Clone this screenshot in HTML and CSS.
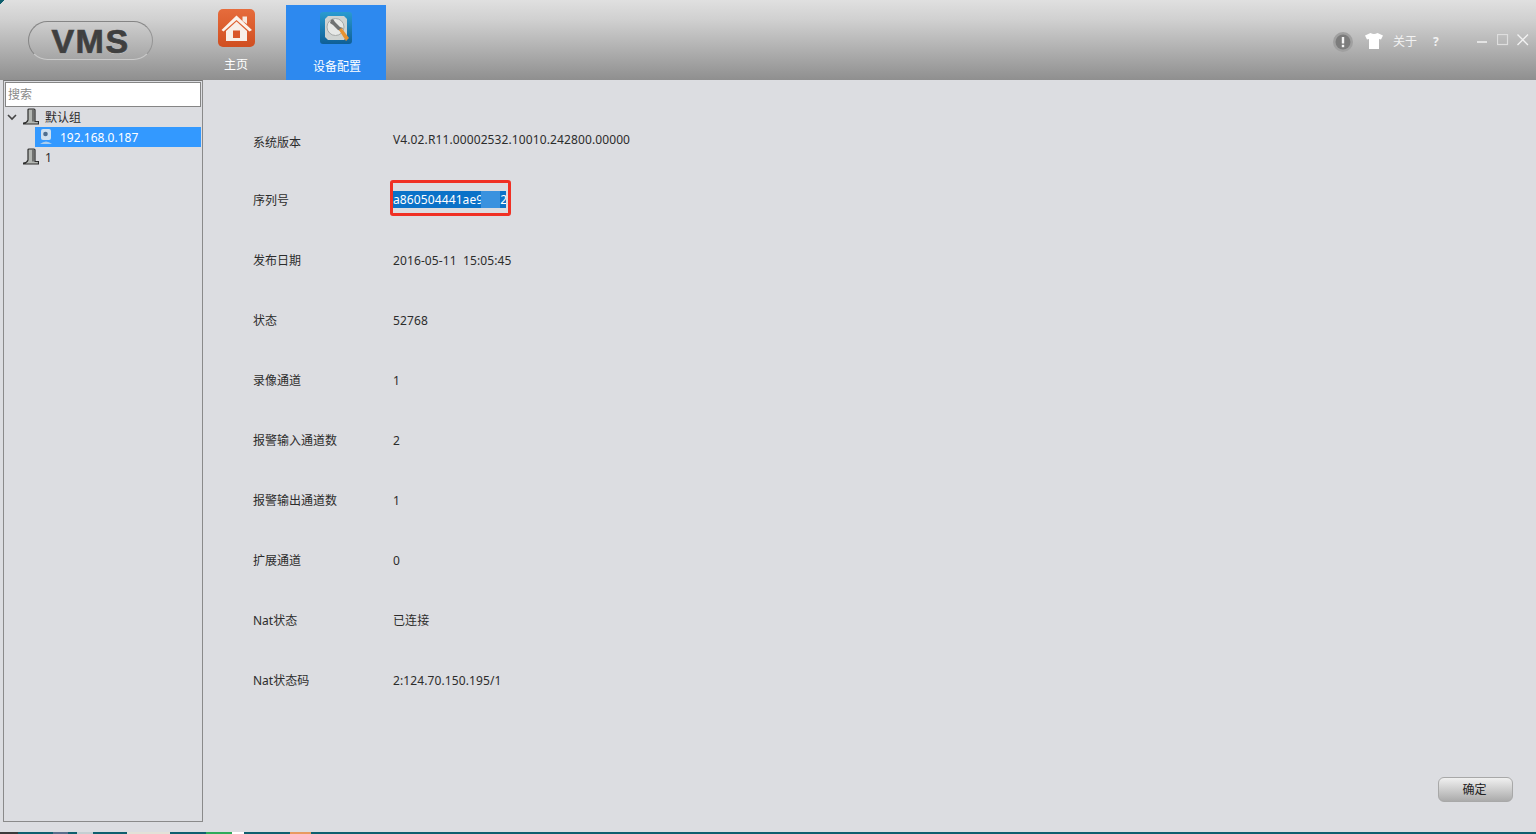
FILE: index.html
```html
<!DOCTYPE html>
<html lang="zh-CN">
<head>
<meta charset="utf-8">
<title>VMS</title>
<link rel="stylesheet" href="styles.css">
</head>
<body>
<div class="app">
  <header class="header">
    <div class="logo"><span class="logo-text">VMS</span></div>
    <nav class="tabs">
      <div class="tab">
        <svg class="tab-icon home-icon" viewBox="0 0 37 38">
          <defs><linearGradient id="homeBg" x1="0" y1="0" x2="0" y2="1"><stop offset="0" stop-color="#e66c3c"/><stop offset="1" stop-color="#d04e20"/></linearGradient></defs>
          <rect x="0" y="0" width="37" height="38" rx="5" fill="url(#homeBg)"/>
          <path d="M24.500 7.500 H29 V15 L24.500 12 Z" fill="#f6e9e0"/>
          <path d="M18.500 6.500 L34 21 L31.500 22.500 L18.500 11 L5.500 22.500 L3.500 21 Z" fill="#fbf3ec"/>
          <path d="M8 22 L18.500 12.500 L29 22 V32 H8 Z" fill="#f8efe8"/>
          <rect x="15" y="21.500" width="7" height="7.500" fill="#d9562a"/>
        </svg>
        <span class="tab-label">主页</span>
      </div>
      <div class="tab tab-active">
        <svg class="tab-icon config-icon" viewBox="0 0 32 33">
          <defs><linearGradient id="cfgBg" x1="0" y1="0" x2="0" y2="1"><stop offset="0" stop-color="#2a9bd0"/><stop offset="1" stop-color="#0f5f96"/></linearGradient></defs>
          <rect x="0" y="0" width="32" height="32" rx="3" fill="url(#cfgBg)"/>
          <path d="M8 4 H24 L27 7 V25 L24 28 H8 L5 25 V7 Z" fill="#cfd3d1"/>
          <circle cx="15.500" cy="15" r="8.500" fill="#e6e8e6" stroke="#a7aaa8"/>
          <path d="M11 8 L13 7 L15 10 L20 15 L23 16 L21 19 L18 18 L13 13 L10 11 Z" fill="#6f7272"/>
          <path d="M19 18 L21.500 16 L29 26 L26 29 Z" fill="#e8912f"/>
        </svg>
        <span class="tab-label">设备配置</span>
      </div>
    </nav>
    <div class="tools">
      <svg class="tool-alert" viewBox="0 0 20 20">
        <circle cx="10" cy="10" r="10" fill="#a0a0a0"/>
        <circle cx="10" cy="10" r="7.500" fill="#7c7c7c"/>
        <rect x="8.800" y="5" width="2.400" height="6.500" fill="#f4f4f4"/>
        <rect x="8.800" y="12.800" width="2.400" height="2.400" fill="#f4f4f4"/>
      </svg>
      <svg class="tool-shirt" viewBox="0 0 18 16">
        <path d="M5.500 0 Q9 2 12.500 0 L18 2.500 L16 6.500 L14 6 V16 H4 V6 L2 6.500 L0 2.500 Z" fill="#fff"/>
      </svg>
      <span class="tool-about">关于</span>
      <span class="tool-help">?</span>
      <div class="window-buttons">
        <svg class="win-btn" viewBox="0 0 12 12"><path d="M0 8 H10" stroke="#f2f2f2" stroke-width="1.500"/></svg>
        <svg class="win-btn" viewBox="0 0 12 12"><rect x="0.500" y="0.500" width="10" height="10" fill="none" stroke="#dedede" stroke-width="1.200"/></svg>
        <svg class="win-btn" viewBox="0 0 12 12"><path d="M0.500 0.500 L11 11 M11 0.500 L0.500 11" stroke="#f2f2f2" stroke-width="1.300"/></svg>
      </div>
    </div>
  </header>

  <main class="main">
    <aside class="sidebar">
      <input class="search" type="text" placeholder="搜索">
      <ul class="tree">
        <li class="tree-row">
          <svg class="chevron" viewBox="0 0 10 7"><path d="M1 1 L5 5 L9 1" fill="none" stroke="#444" stroke-width="1.600"/></svg>
          <svg class="group-icon" viewBox="0 0 16 17"><path d="M5 2 Q5 1 6 1 H11 Q12 1 12 2 V13.500 H15.500 V16 H0.500 V15 Q4 15 5 12 Z" fill="#b4b7b3" stroke="#2e2e2e" stroke-width="1.200"/><path d="M10 1.500 V13.500" stroke="#5a5a5a" stroke-width="1.500"/></svg>
          <span class="tree-label">默认组</span>
        </li>
        <li class="tree-row tree-selected">
          <svg class="camera-icon" viewBox="0 0 14 16"><rect x="2" y="0" width="10" height="11" rx="2" fill="#cfe0ee"/><circle cx="6.500" cy="5" r="2.300" fill="#4f6f8f"/><path d="M1 15 Q7 10 13 15 Z" fill="#a9cdee"/></svg>
          <span class="tree-ip">192.168.0.187</span>
        </li>
        <li class="tree-row">
          <svg class="group-icon group-icon-plain" viewBox="0 0 16 17"><path d="M5 2 Q5 1 6 1 H11 Q12 1 12 2 V13.500 H15.500 V16 H0.500 V15 Q4 15 5 12 Z" fill="#b4b7b3" stroke="#2e2e2e" stroke-width="1.200"/><path d="M10 1.500 V13.500" stroke="#5a5a5a" stroke-width="1.500"/></svg>
          <span class="tree-label">1</span>
        </li>
      </ul>
    </aside>
    <section class="content">
      <dl class="info">
        <div class="info-row"><dt>系统版本</dt><dd class="raised">V4.02.R11.00002532.10010.242800.00000</dd></div>
        <div class="info-row info-serial"><dt>序列号</dt><dd class="serial"><span class="selection">a860504441ae9<span class="mask"></span>2</span><span class="red-box"></span></dd></div>
        <div class="info-row"><dt>发布日期</dt><dd>2016-05-11 15:05:45</dd></div>
        <div class="info-row"><dt>状态</dt><dd>52768</dd></div>
        <div class="info-row"><dt>录像通道</dt><dd>1</dd></div>
        <div class="info-row"><dt>报警输入通道数</dt><dd>2</dd></div>
        <div class="info-row"><dt>报警输出通道数</dt><dd>1</dd></div>
        <div class="info-row"><dt>扩展通道</dt><dd>0</dd></div>
        <div class="info-row"><dt>Nat状态</dt><dd>已连接</dd></div>
        <div class="info-row"><dt>Nat状态码</dt><dd>2:124.70.150.195/1</dd></div>
      </dl>
      <div class="actions"><button class="ok-btn" type="button">确定</button></div>
    </section>
  </main>
  <footer class="taskbar">
    <span class="tb tb-0"></span><span class="tb tb-a"></span><span class="tb tb-a2"></span><span class="tb tb-b"></span><span class="tb tb-c"></span><span class="tb tb-d"></span><span class="tb tb-e"></span>
  </footer>
</div>
</body>
</html>
```
FILE: styles.css
```css
* { box-sizing: border-box; }
html, body { margin: 0; height: 100%; overflow: hidden; }
body {
  font-family: "Noto Sans", "Noto Sans CJK SC", sans-serif;
  font-size: 12px;
  color: #2c2c2c;
  background: #dcdde1;
}
.app { width: 1536px; height: 834px; display: flex; flex-direction: column; }

/* header */
.header {
  position: relative;
  height: 80px;
  flex: none;
  display: flex;
  background: linear-gradient(#e0e0e0 0%, #d0d0d0 25%, #8f8f8f 100%);
}
.header::before {
  content: "";
  position: absolute;
  left: 0;
  top: 0;
  width: 4px;
  height: 4px;
  background: linear-gradient(135deg, #0f5f6e 50%, transparent 50%);
}
.logo {
  width: 125px;
  height: 39px;
  margin: 21px 33px 0 28px;
  border-radius: 20px;
  border: 1px solid #858585;
  border-bottom-color: #cacaca;
  border-right-color: #959595;
  display: flex;
  align-items: center;
  justify-content: center;
}
.logo-text {
  font-family: "Liberation Sans", Arial, sans-serif;
  font-weight: 700;
  font-size: 34px;
  letter-spacing: 1.500px;
  color: #3f3f3f;
  -webkit-text-stroke: 0.700px #3f3f3f;
  text-shadow: 0 1px 0 #c6c6c6;
  line-height: 1;
}
.tabs { display: flex; }
.tab {
  width: 100px;
  display: flex;
  flex-direction: column;
  align-items: center;
  color: #fff;
}
.tab-active { background: #2d89ef; margin-top: 5px; }
.tab-icon { display: block; flex: none; }
.home-icon { width: 37px; height: 38px; margin-top: 9px; }
.config-icon { width: 32px; height: 33px; margin-top: 7px; }
.tab-label { line-height: 18px; margin-top: 9px; }
.tab-active .tab-label { margin: 13px 0 0 2px; }

.tools {
  margin-left: auto;
  display: flex;
  align-items: flex-start;
  padding-right: 7px;
}
.tool-alert { width: 20px; height: 20px; margin-top: 32px; }
.tool-shirt { width: 18px; height: 16px; margin: 33px 0 0 12px; }
.tool-about { margin: 33px 0 0 10px; line-height: 18px; color: #f2f2f2; }
.tool-help { margin: 33px 0 0 16px; width: 8px; line-height: 18px; color: #f2f2f2; font-weight: 700; }
.window-buttons { display: flex; gap: 8px; margin: 34px 0 0 36px; }
.win-btn { width: 12px; height: 12px; display: block; }

/* main */
.main { flex: 1; display: flex; min-height: 0; }
.sidebar {
  width: 200px;
  height: 742px;
  margin-left: 3px;
  border: 1px solid #8a8a8a;
  border-top-color: #777;
  padding: 1px;
  flex: none;
}
.search {
  display: block;
  width: 196px;
  height: 25px;
  border: 1px solid #858585;
  background: #fff;
  padding: 0 2px;
  font: inherit;
  outline: none;
}
.search::placeholder { color: #8a8a8a; opacity: 1; }
.tree { list-style: none; margin: 0; padding: 0; }
.tree-row {
  height: 20px;
  display: flex;
  align-items: center;
  padding-left: 2px;
}
.chevron { width: 10px; height: 7px; flex: none; }
.group-icon { width: 16px; height: 17px; margin: -2px 0 0 6px; flex: none; }
.group-icon-plain { margin-left: 16px; }
.tree-label { margin-left: 6px; }
.tree-selected {
  margin-left: 30px;
  width: 166px;
  padding-left: 4px;
  background: #3399ff;
  color: #fff;
}
.camera-icon { width: 14px; height: 16px; flex: none; }
.tree-ip { margin-left: 7px; color: #fff; }

/* content */
.content { flex: 1; position: relative; display: flex; flex-direction: column; }
.info { margin: 32px 0 0 50px; }
.info-row {
  height: 60px;
  display: flex;
  align-items: center;
  margin: 0;
}
.info-serial { height: 58px; padding-bottom: 2px; }
.info-row dt { width: 140px; flex: none; }
.info-row dd { margin: 0; letter-spacing: 0.110px; word-spacing: 3px; }
.raised { position: relative; top: -3px; }
.serial { position: relative; top: -1px; }
.selection {
  display: block;
  height: 17px;
  line-height: 17px;
  background: #0b72c8;
  color: #fff;
  width: 113px;
  white-space: nowrap;
  overflow: hidden;
}
.mask {
  display: inline-block;
  width: 19px;
  height: 17px;
  vertical-align: top;
  margin-left: -2px;
  background: #3a92df;
}
.red-box {
  position: absolute;
  left: -3px;
  top: -11px;
  width: 121px;
  height: 36px;
  border: 3px solid #f03024;
  border-radius: 3px;
}
.actions {
  margin-top: auto;
  padding: 0 23px 30px 0;
  display: flex;
  justify-content: flex-end;
}
.ok-btn {
  width: 75px;
  height: 25px;
  border: 1px solid #a8a8a8;
  border-radius: 6px;
  background: linear-gradient(#f0f0f0, #ababab);
  font: inherit;
  color: #222;
  padding: 0 2px 2px 0;
}

/* taskbar strip */
.taskbar { height: 2px; flex: none; background: #0f5f6e; display: flex; }
.tb { display: block; height: 2px; }
.tb-0 { width: 18px; background: #3a3a3a; }
.tb-a { width: 15px; margin-left: 35px; background: #5a6f8c; }
.tb-a2 { width: 16px; margin-left: 9px; background: #c4cfd2; }
.tb-b { width: 43px; margin-left: 34px; background: #e2e2d8; }
.tb-c { width: 26px; margin-left: 36px; background: #2eaa5a; }
.tb-d { width: 12px; background: #fff; }
.tb-e { width: 21px; margin-left: 46px; background: #e89a60; }
```
